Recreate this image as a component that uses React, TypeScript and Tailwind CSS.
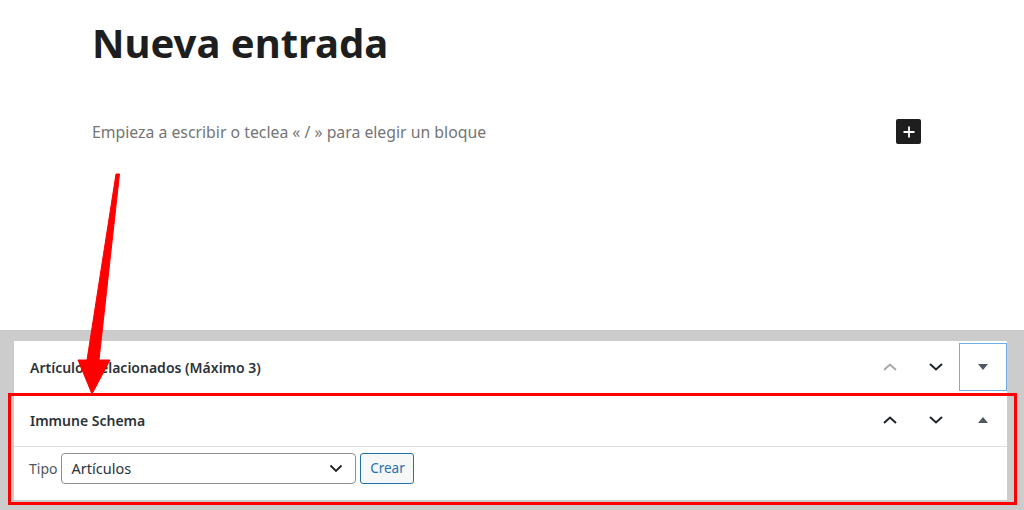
import React from "react";

const Up = ({ color }: { color: string }) => (
  <svg width="16" height="10" viewBox="0 0 16 10" fill="none">
    <polyline points="2,8 8,2.5 14,8" stroke={color} strokeWidth="2" />
  </svg>
);
const Down = ({ color }: { color: string }) => (
  <svg width="16" height="10" viewBox="0 0 16 10" fill="none">
    <polyline points="2,2 8,7.5 14,2" stroke={color} strokeWidth="2" />
  </svg>
);

export default function App() {
  return (
    <div
      className="relative w-[1024px] h-[510px] overflow-hidden bg-white"
      style={{ fontFamily: '"Noto Sans", "Open Sans", sans-serif' }}
    >
      <div className="h-[330px] bg-white pl-[92px] pr-[103px]">
        <h1 className="pt-[17px] text-[40px] leading-[52px] font-bold text-[#1e1e1e]">
          Nueva entrada
        </h1>
        <div className="mt-[50px] flex items-start justify-between">
          <p className="mt-[1px] text-[15.8px] leading-[24px] text-[#757575]">
            Empieza a escribir o teclea « / » para elegir un bloque
          </p>
          <div className="w-[25px] h-[25px] rounded-[2px] bg-[#1e1e1e] flex items-center justify-center">
            <svg width="14" height="14" viewBox="0 0 14 14">
              <path d="M7 1.5v11M1.5 7h11" stroke="white" strokeWidth="1.8" />
            </svg>
          </div>
        </div>
      </div>

      <div className="h-[180px] bg-[#cccccc] pt-[11px] pl-[14px] pr-[17px]">
        <div className="bg-white">
          <div className="h-[53px] flex items-center border-b border-[#e0e0e0]">
            <span className="flex-1 pl-[16px] text-[14px] font-semibold text-[#2c3338]">
              Artículos relacionados (Máximo 3)
            </span>
            <div className="w-[46px] flex justify-center">
              <Up color="#a7aaad" />
            </div>
            <div className="w-[46px] flex justify-center">
              <Down color="#1d2327" />
            </div>
            <div className="w-[48px] h-[48px] border border-[#72aee6] flex items-center justify-center self-start mt-[2px]">
              <svg width="10" height="6" viewBox="0 0 10 6">
                <polygon points="0,0 10,0 5,6" fill="#50575e" />
              </svg>
            </div>
          </div>
          <div className="h-[53px] flex items-center border-b border-[#e0e0e0]">
            <span className="flex-1 pl-[16px] text-[14px] font-semibold text-[#2c3338]">
              Immune Schema
            </span>
            <div className="w-[46px] flex justify-center">
              <Up color="#1d2327" />
            </div>
            <div className="w-[46px] flex justify-center">
              <Down color="#1d2327" />
            </div>
            <div className="w-[48px] flex justify-center">
              <svg width="10" height="6" viewBox="0 0 10 6">
                <polygon points="0,6 10,6 5,0" fill="#50575e" />
              </svg>
            </div>
          </div>
          <div className="h-[53px] flex items-start pt-[6px] pl-[15px] gap-[4px]">
            <span className="text-[14px] leading-[31px] text-[#50575e]">Tipo</span>
            <div className="w-[295px] h-[31px] border border-[#8c8f94] rounded-[4px] flex items-center justify-between pl-[9px] pr-[12px]">
              <span className="text-[14.5px] text-[#2c3338]">Artículos</span>
              <svg width="14" height="9" viewBox="0 0 14 9" fill="none">
                <polyline points="1.5,1.5 7,7 12.5,1.5" stroke="#1d2327" strokeWidth="1.8" />
              </svg>
            </div>
            <button className="h-[31px] w-[54px] border border-[#2271b1] rounded-[3px] bg-[#f6f7f7] text-[13.5px] text-[#2271b1]">
              Crear
            </button>
          </div>
        </div>
      </div>

      {/* red highlight box */}
      <div className="absolute left-[8px] top-[393px] w-[1009px] h-[112px] border-[3px] border-[#ff0000] pointer-events-none" />

      {/* arrow */}
      <svg className="absolute left-0 top-0 pointer-events-none" width="1024" height="510">
        <polygon
          points="116,174 119.5,174 99,360 110,360 92,394 78,360 87,360"
          fill="#ff0000"
          stroke="#ff0000"
          strokeWidth="1"
          strokeLinejoin="round"
        />
      </svg>
    </div>
  );
}
